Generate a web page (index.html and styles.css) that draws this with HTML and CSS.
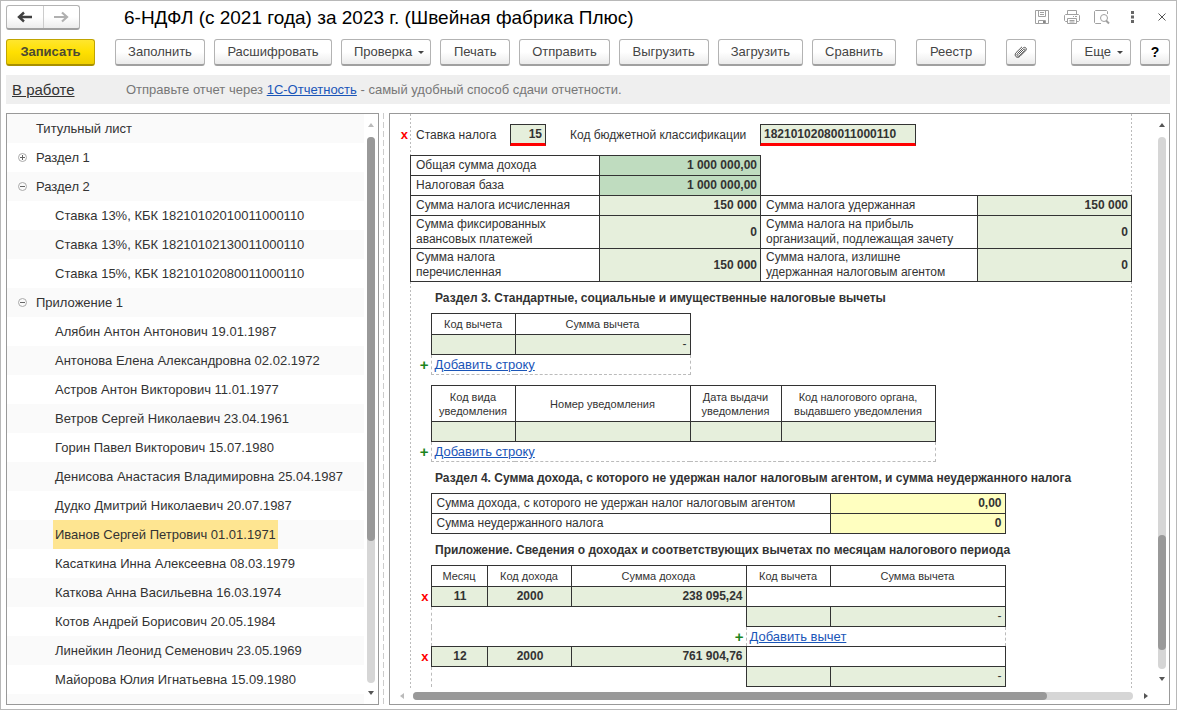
FILE: index.html
```html
<!DOCTYPE html>
<html lang="ru">
<head>
<meta charset="utf-8">
<meta name="viewport" content="width=device-width, initial-scale=1">
<title>6-НДФЛ (с 2021 года) за 2023 г. (Швейная фабрика Плюс)</title>
<link rel="stylesheet" href="styles.css">
</head>
<body>
<div class="window">
  <header class="titlebar">
    <div class="history">
      <button type="button" class="history-btn" aria-label="Назад"><svg width="16" height="12" viewBox="0 0 16 12"><path d="M15 6H3M7 1.5L2 6l5 4.500" fill="none" stroke="#404040" stroke-width="2.400"/></svg></button>
      <button type="button" class="history-btn" aria-label="Вперед"><svg width="16" height="12" viewBox="0 0 16 12"><path d="M1 6h12M9 1.500L14 6l-5 4.500" fill="none" stroke="#b0b0b0" stroke-width="2.200"/></svg></button>
    </div>
    <h1 class="title">6-НДФЛ (с 2021 года) за 2023 г. (Швейная фабрика Плюс)</h1>
    <div class="window-tools">
      <button type="button" class="tool" aria-label="Сохранить"><svg width="16" height="16" viewBox="0 0 16 16" fill="none" stroke="#a0a0a0"><path d="M1.500 .5h13v13h-13zM4.500 .5v6h7v-6M6 2.500h4M6 4.500h4M4.500 13.500v-3h7v3"/><path d="M9 11h2v2H9z" fill="#888" stroke="none"/></svg></button>
      <button type="button" class="tool" aria-label="Печать"><svg width="16" height="16" viewBox="0 0 16 16" fill="none" stroke="#a0a0a0"><path d="M3.500 4.500v-4h9v4M3.500 11.500h-2l-1-1v-5l1-1h13l1 1v5l-1 1h-2M3.500 8.500h9v5h-9zM5.500 10.500h5M5.500 12h5M9 6.500h1M11 6.500h2"/></svg></button>
      <button type="button" class="tool" aria-label="Просмотр"><svg width="16" height="16" viewBox="0 0 16 16" fill="none" stroke="#a0a0a0"><path d="M7 13.500H1.500l-1-1v-11l1-1h11l1 1V4"/><circle cx="10" cy="8" r="3.500"/><path d="M12 10.500l3 3" stroke-width="2"/></svg></button>
      <button type="button" class="tool" aria-label="Меню"><svg width="16" height="16" viewBox="0 0 16 16" fill="#666"><path d="M7 1h3v3H7zM7 5.500h3v3H7zM7 10h3v3H7z"/></svg></button>
      <button type="button" class="tool" aria-label="Закрыть"><svg width="16" height="16" viewBox="0 0 16 16"><path d="M4.500 3.500l7 7M11.500 3.500l-7 7" stroke="#555"/></svg></button>
    </div>
  </header>

  <div class="toolbar">
    <button type="button" class="btn btn-primary">Записать</button>
    <button type="button" class="btn btn-m">Заполнить</button>
    <button type="button" class="btn btn-l">Расшифровать</button>
    <button type="button" class="btn btn-menu">Проверка</button>
    <button type="button" class="btn btn-s">Печать</button>
    <button type="button" class="btn btn-m">Отправить</button>
    <button type="button" class="btn btn-m">Выгрузить</button>
    <button type="button" class="btn">Загрузить</button>
    <button type="button" class="btn">Сравнить</button>
    <button type="button" class="btn btn-s btn-apart">Реестр</button>
    <button type="button" class="btn btn-icon btn-apart" aria-label="Вложения"><svg width="14" height="14" viewBox="0 0 14 14"><path d="M4.500 9.500l5-5c1-1 2 0 1.200 1L5.500 10.700c-1.500 1.500-3.500-.5-2-2.200L8.800 3.200c2.200-2.200 4.800.3 2.800 2.500L6 11.300c-2.800 2.800-6.500-.6-4-3.600L8 1.800" fill="none" stroke="#555"/></svg></button>
    <button type="button" class="btn btn-menu btn-end">Еще</button>
    <button type="button" class="btn btn-icon btn-help" aria-label="Справка">?</button>
  </div>

  <div class="status">
    <a href="#" class="state">В работе</a>
    <p class="hint">Отправьте отчет через <a href="#">1С-Отчетность</a> - самый удобный способ сдачи отчетности.</p>
  </div>

  <main class="panes">
    <nav class="panel tree">
      <ul class="tree-list">
        <li>Титульный лист</li>
        <li><button type="button" class="knob" aria-label="Развернуть"><svg width="11" height="11" viewBox="0 0 11 11"><circle cx="5.500" cy="5.500" r="4" fill="none" stroke="#aaa"/><path d="M3 5.500h5M5.500 3v5" stroke="#666"/></svg></button>Раздел 1</li>
        <li><button type="button" class="knob" aria-label="Свернуть"><svg width="11" height="11" viewBox="0 0 11 11"><circle cx="5.500" cy="5.500" r="4" fill="none" stroke="#aaa"/><path d="M3 5.500h5" stroke="#666"/></svg></button>Раздел 2</li>
        <li class="sub">Ставка 13%, КБК 18210102010011000110</li>
        <li class="sub">Ставка 13%, КБК 18210102130011000110</li>
        <li class="sub">Ставка 15%, КБК 18210102080011000110</li>
        <li><button type="button" class="knob" aria-label="Свернуть"><svg width="11" height="11" viewBox="0 0 11 11"><circle cx="5.500" cy="5.500" r="4" fill="none" stroke="#aaa"/><path d="M3 5.500h5" stroke="#666"/></svg></button>Приложение 1</li>
        <li class="sub">Алябин Антон Антонович 19.01.1987</li>
        <li class="sub">Антонова Елена Александровна 02.02.1972</li>
        <li class="sub">Астров Антон Викторович 11.01.1977</li>
        <li class="sub">Ветров Сергей Николаевич 23.04.1961</li>
        <li class="sub">Горин Павел Викторович 15.07.1980</li>
        <li class="sub">Денисова Анастасия Владимировна 25.04.1987</li>
        <li class="sub">Дудко Дмитрий Николаевич 20.07.1987</li>
        <li class="sub"><span class="selected">Иванов Сергей Петрович 01.01.1971</span></li>
        <li class="sub">Касаткина Инна Алексеевна 08.03.1979</li>
        <li class="sub">Каткова Анна Васильевна 16.03.1974</li>
        <li class="sub">Котов Андрей Борисович 20.05.1984</li>
        <li class="sub">Линейкин Леонид Семенович 23.05.1969</li>
        <li class="sub">Майорова Юлия Игнатьевна 15.09.1980</li>
        <li class="sub">Носов Ада Олег 18.09.1989</li>
      </ul>
      <div class="vscroll">
        <span class="arrow arrow-up arrow-off"></span>
        <div class="vtrack tree-track"><div class="thumb tree-thumb"></div></div>
        <span class="arrow arrow-down"></span>
      </div>
    </nav>

    <div class="splitter"></div>

    <section class="panel report">
      <div class="report-main">
        <div class="viewport">
          <div class="markers"><button type="button" class="remove" aria-label="Удалить ставку">x</button></div>
          <div class="sheet">
            <div class="rate">
              <label for="rate" class="rate-label">Ставка налога</label>
              <input id="rate" class="field rate-field" value="15">
              <label for="kbk" class="kbk-label">Код бюджетной классификации</label>
              <input id="kbk" class="field kbk-field" value="18210102080011000110">
            </div>

            <table class="grid totals">
              <colgroup><col class="w189"><col class="w161"><col class="w217"><col class="w154"></colgroup>
              <tr><td>Общая сумма дохода</td><td class="num calc">1 000 000,00</td></tr>
              <tr><td>Налоговая база</td><td class="num calc">1 000 000,00</td></tr>
              <tr><td>Сумма налога исчисленная</td><td class="num edit">150 000</td><td>Сумма налога удержанная</td><td class="num edit">150 000</td></tr>
              <tr class="two"><td>Сумма фиксированных<br>авансовых платежей</td><td class="num edit">0</td><td>Сумма налога на прибыль<br>организаций, подлежащая зачету</td><td class="num edit">0</td></tr>
              <tr class="two"><td>Сумма налога<br>перечисленная</td><td class="num edit">150 000</td><td>Сумма налога, излишне<br>удержанная налоговым агентом</td><td class="num edit">0</td></tr>
            </table>

            <h2>Раздел 3. Стандартные, социальные и имущественные налоговые вычеты</h2>
            <table class="grid">
              <colgroup><col class="w21"><col class="w84"><col class="w175"></colgroup>
              <tr class="head"><td class="none"></td><th>Код вычета</th><th>Сумма вычета</th></tr>
              <tr><td class="none"></td><td class="edit"></td><td class="edit dash">-</td></tr>
              <tr><td class="none plus">+</td><td class="add" colspan="2"><a href="#">Добавить строку</a></td></tr>
            </table>

            <table class="grid notices">
              <colgroup><col class="w21"><col class="w84"><col class="w175"><col class="w91"><col class="w154"></colgroup>
              <tr class="head tall"><td class="none"></td><th>Код вида<br>уведомления</th><th>Номер уведомления</th><th>Дата выдачи<br>уведомления</th><th>Код налогового органа,<br>выдавшего уведомления</th></tr>
              <tr><td class="none"></td><td class="edit"></td><td class="edit"></td><td class="edit"></td><td class="edit"></td></tr>
              <tr><td class="none plus">+</td><td class="add" colspan="4"><a href="#">Добавить строку</a></td></tr>
            </table>

            <h2>Раздел 4. Сумма дохода, с которого не удержан налог налоговым агентом, и сумма неудержанного налога</h2>
            <table class="grid">
              <colgroup><col class="w21"><col class="w399"><col class="w175"></colgroup>
              <tr><td class="none"></td><td>Сумма дохода, с которого не удержан налог налоговым агентом</td><td class="num input">0,00</td></tr>
              <tr><td class="none"></td><td>Сумма неудержанного налога</td><td class="num input">0</td></tr>
            </table>

            <h2>Приложение. Сведения о доходах и соответствующих вычетах по месяцам налогового периода</h2>
            <table class="grid">
              <colgroup><col class="w21"><col class="w56"><col class="w84"><col class="w175"><col class="w84"><col class="w175"></colgroup>
              <tr class="head"><td class="none"></td><th>Месяц</th><th>Код дохода</th><th>Сумма дохода</th><th>Код вычета</th><th>Сумма вычета</th></tr>
              <tr><td class="none"><button type="button" class="remove" aria-label="Удалить месяц 11">x</button></td><td class="mid edit">11</td><td class="mid edit">2000</td><td class="num edit">238 095,24</td><td colspan="2"></td></tr>
              <tr><td class="none"></td><td class="group" colspan="3"></td><td class="edit"></td><td class="edit dash">-</td></tr>
              <tr><td class="none"></td><td class="group plus" colspan="3">+</td><td class="add" colspan="2"><a href="#">Добавить вычет</a></td></tr>
              <tr><td class="none"><button type="button" class="remove" aria-label="Удалить месяц 12">x</button></td><td class="mid edit">12</td><td class="mid edit">2000</td><td class="num edit">761 904,76</td><td colspan="2"></td></tr>
              <tr><td class="none"></td><td class="group" colspan="3"></td><td class="edit"></td><td class="edit dash">-</td></tr>
            </table>
          </div>
        </div>
        <div class="hscroll">
          <span class="arrow arrow-left arrow-off"></span>
          <div class="htrack"><div class="thumb report-hthumb"></div></div>
          <span class="arrow arrow-right"></span>
        </div>
      </div>
      <div class="vscroll report-vscroll">
        <span class="arrow arrow-up"></span>
        <div class="vtrack"><div class="thumb report-thumb"></div></div>
        <span class="arrow arrow-down"></span>
      </div>
    </section>
  </main>
</div>
</body>
</html>
```
FILE: styles.css
```css
* { box-sizing: border-box; }
body { margin: 0; font: 13px/16px "Liberation Sans", Arial, sans-serif; color: #333; background: #fff; }
button { font: inherit; color: inherit; }
a { color: #1a55b8; }

.window { height: 100vh; display: flex; flex-direction: column; padding: 4px 6px 4px 5px; border: 1px solid #b8b8b8; overflow: hidden; }

.titlebar { display: flex; align-items: center; height: 25px; flex: none; }
.history { display: flex; width: 74px; height: 25px; border: 1px solid #b3b3b3; border-bottom: 2px solid #a0a0a0; border-radius: 3px; background: linear-gradient(#fff 50%, #ececec); }
.history-btn { flex: 1; display: flex; align-items: center; justify-content: center; padding: 0; border: 0; background: none; }
.history-btn + .history-btn { border-left: 1px solid #ccc; }
.title { margin: 0 0 0 44px; font-size: 19px; line-height: 24px; font-weight: 400; color: #000; white-space: nowrap; }
.window-tools { display: flex; gap: 14px; margin-left: auto; }
.tool { display: flex; padding: 0; border: 0; background: none; }

.toolbar { display: flex; gap: 9px; margin-top: 9px; flex: none; }
.btn { height: 27px; padding: 0 12px; border: 1px solid #b3b3b3; border-bottom: 2px solid #a0a0a0; border-radius: 3px; background: linear-gradient(#fff 50%, #ebebeb); color: #444; white-space: nowrap; }
.btn-s { min-width: 70px; }
.btn-m { min-width: 90px; }
.btn-l { min-width: 118px; }
.btn-primary { min-width: 89px; margin-right: 11px; font-weight: 700; color: #4d4a33; border-color: #c0a400; border-bottom-color: #a89000; background: linear-gradient(#ffe62e, #ffe000 50%, #efcf00); }
.btn-apart { margin-left: 11px; }
.btn-end { margin-left: auto; }
.btn-menu { display: flex; align-items: center; gap: 6px; padding-right: 6px; }
.btn-menu::after { content: ""; border: 3px solid transparent; border-top-color: #444; border-bottom: 0; }
.btn-end { padding: 0 7px 0 13px; }
.btn-icon { display: flex; align-items: center; justify-content: center; width: 30px; padding: 0; }
.btn-help { font-size: 14px; font-weight: 700; color: #000; }

.status { display: flex; align-items: center; height: 29px; margin-top: 9px; padding-left: 6px; background: #efefef; flex: none; }
.state { width: 114px; font-size: 15px; color: #333; }
.hint { margin: 0; color: #777; white-space: nowrap; }

.panes { flex: 1; min-height: 0; display: flex; margin-top: 9px; }
.panel { display: flex; border: 1px solid #999; overflow: hidden; }
.tree { width: 373px; flex: none; }
.tree-list { flex: 1; margin: 0; padding: 0; list-style: none; overflow: hidden; }
.tree-list li { position: relative; height: 29px; padding-left: 29px; line-height: 29px; white-space: nowrap; }
.tree-list li:nth-child(odd) { background: #fafafa; }
.tree-list .sub { padding-left: 48px; }
.knob { position: absolute; left: 10px; top: 9px; display: flex; padding: 0; border: 0; background: none; }
.selected { display: inline-block; margin-left: -2px; padding: 0 2px; background: #fee591; }

.splitter { width: 10px; background: repeating-linear-gradient(#ccc 0 6px, transparent 6px 9px) 4px 0 / 1px 100% no-repeat; flex: none; }

.vscroll { display: flex; flex-direction: column; align-items: center; width: 14px; padding: 9px 3px 9px; flex: none; }
.vtrack { flex: 1; width: 8px; margin: 10px 0 8px; border-radius: 4px; background: #d6d6d6; }
.thumb { border-radius: 4px; background: #999; }
.tree-thumb { height: 74%; }
.report-vscroll { padding-bottom: 23px; }
.report-vscroll .vtrack { display: flex; flex-direction: column; justify-content: flex-end; padding-bottom: 19px; }
.report-thumb { height: 115px; }
.hscroll { display: flex; align-items: center; height: 8px; margin: 4px 7px 4px 10px; flex: none; }
.htrack { flex: 1; height: 8px; margin: 0 11px 0 9px; border-radius: 4px; background: #d6d6d6; }
.report-hthumb { width: 88%; height: 8px; }
.arrow { border: 3px solid transparent; flex: none; }
.arrow-up { border-bottom: 4px solid #555; border-top: 0; }
.arrow-down { border-top: 4px solid #555; border-bottom: 0; }
.arrow-left { border-right: 4px solid #555; border-left: 0; }
.arrow-right { border-left: 4px solid #555; border-right: 0; }
.arrow-up.arrow-off { border-bottom-color: #bbb; }
.arrow-left.arrow-off { border-right-color: #bbb; }

.report { flex: 1; min-width: 0; }
.report-main { flex: 1; min-width: 0; display: flex; flex-direction: column; }
.viewport { flex: 1; min-height: 0; display: flex; overflow: hidden; }
.markers { width: 20px; padding: 13px 2px 0 0; text-align: right; flex: none; }
.remove { padding: 0; border: 0; background: none; font-size: 13px; line-height: 16px; font-weight: 700; color: #f00; }
.sheet { width: 722px; flex: none; background: repeating-linear-gradient(#bbb 0 2px, transparent 2px 4px) 0 0 / 1px 100% no-repeat, repeating-linear-gradient(#bbb 0 2px, transparent 2px 4px) 100% 0 / 1px 100% no-repeat; }

.rate { display: flex; align-items: center; height: 41px; padding-left: 6px; font-size: 12px; }
.rate-label { width: 94px; }
.rate-field { width: 36px; text-align: right; }
.kbk-label { width: 190px; margin-left: 24px; }
.kbk-field { width: 156px; }
.field { height: 22px; padding: 0 3px; border: 1px solid #333; border-bottom: 3px solid #f00; border-radius: 0; background: #e6efdc; font: 700 12px/16px "Liberation Sans", Arial, sans-serif; color: #333; }

.grid { border-collapse: collapse; table-layout: fixed; width: 0; font-size: 12px; line-height: 15px; }
.grid td, .grid th { height: 20px; padding: 0 3px 0 5px; border: 1px solid #333; white-space: nowrap; }
.grid .two td { height: 33px; }
.grid .head th { height: 21px; padding: 0 2px; font-size: 11px; line-height: 14px; font-weight: 400; text-align: center; }
.grid .tall th { height: 36px; }
.grid .none { padding: 0 2px 0 0; border: 0; text-align: right; }
.grid .num { font-weight: 700; text-align: right; }
.grid .mid { font-weight: 700; text-align: center; }
.grid .dash { text-align: right; }
.grid .calc { background: #bfdcbf; }
.grid .edit { background: #e6efdc; }
.grid .input { background: #ffffc0; }
.grid .add { padding-left: 3px; border: 1px dashed #bbb; font-size: 13px; }
.grid .group { border: 0; border-left: 1px dashed #bbb; }
.grid .plus { padding-right: 2px; font-size: 15px; font-weight: 700; text-align: right; color: #1c851c; }
.notices { margin-top: 10px; }
h2 { margin: 8px 0 7px; padding-left: 25px; font-size: 12px; line-height: 16px; font-weight: 700; white-space: nowrap; }

.w21 { width: 21px; }
.w56 { width: 56px; }
.w84 { width: 84px; }
.w91 { width: 91px; }
.w154 { width: 154px; }
.w161 { width: 161px; }
.w175 { width: 175px; }
.w189 { width: 189px; }
.w217 { width: 217px; }
.w399 { width: 399px; }
```
